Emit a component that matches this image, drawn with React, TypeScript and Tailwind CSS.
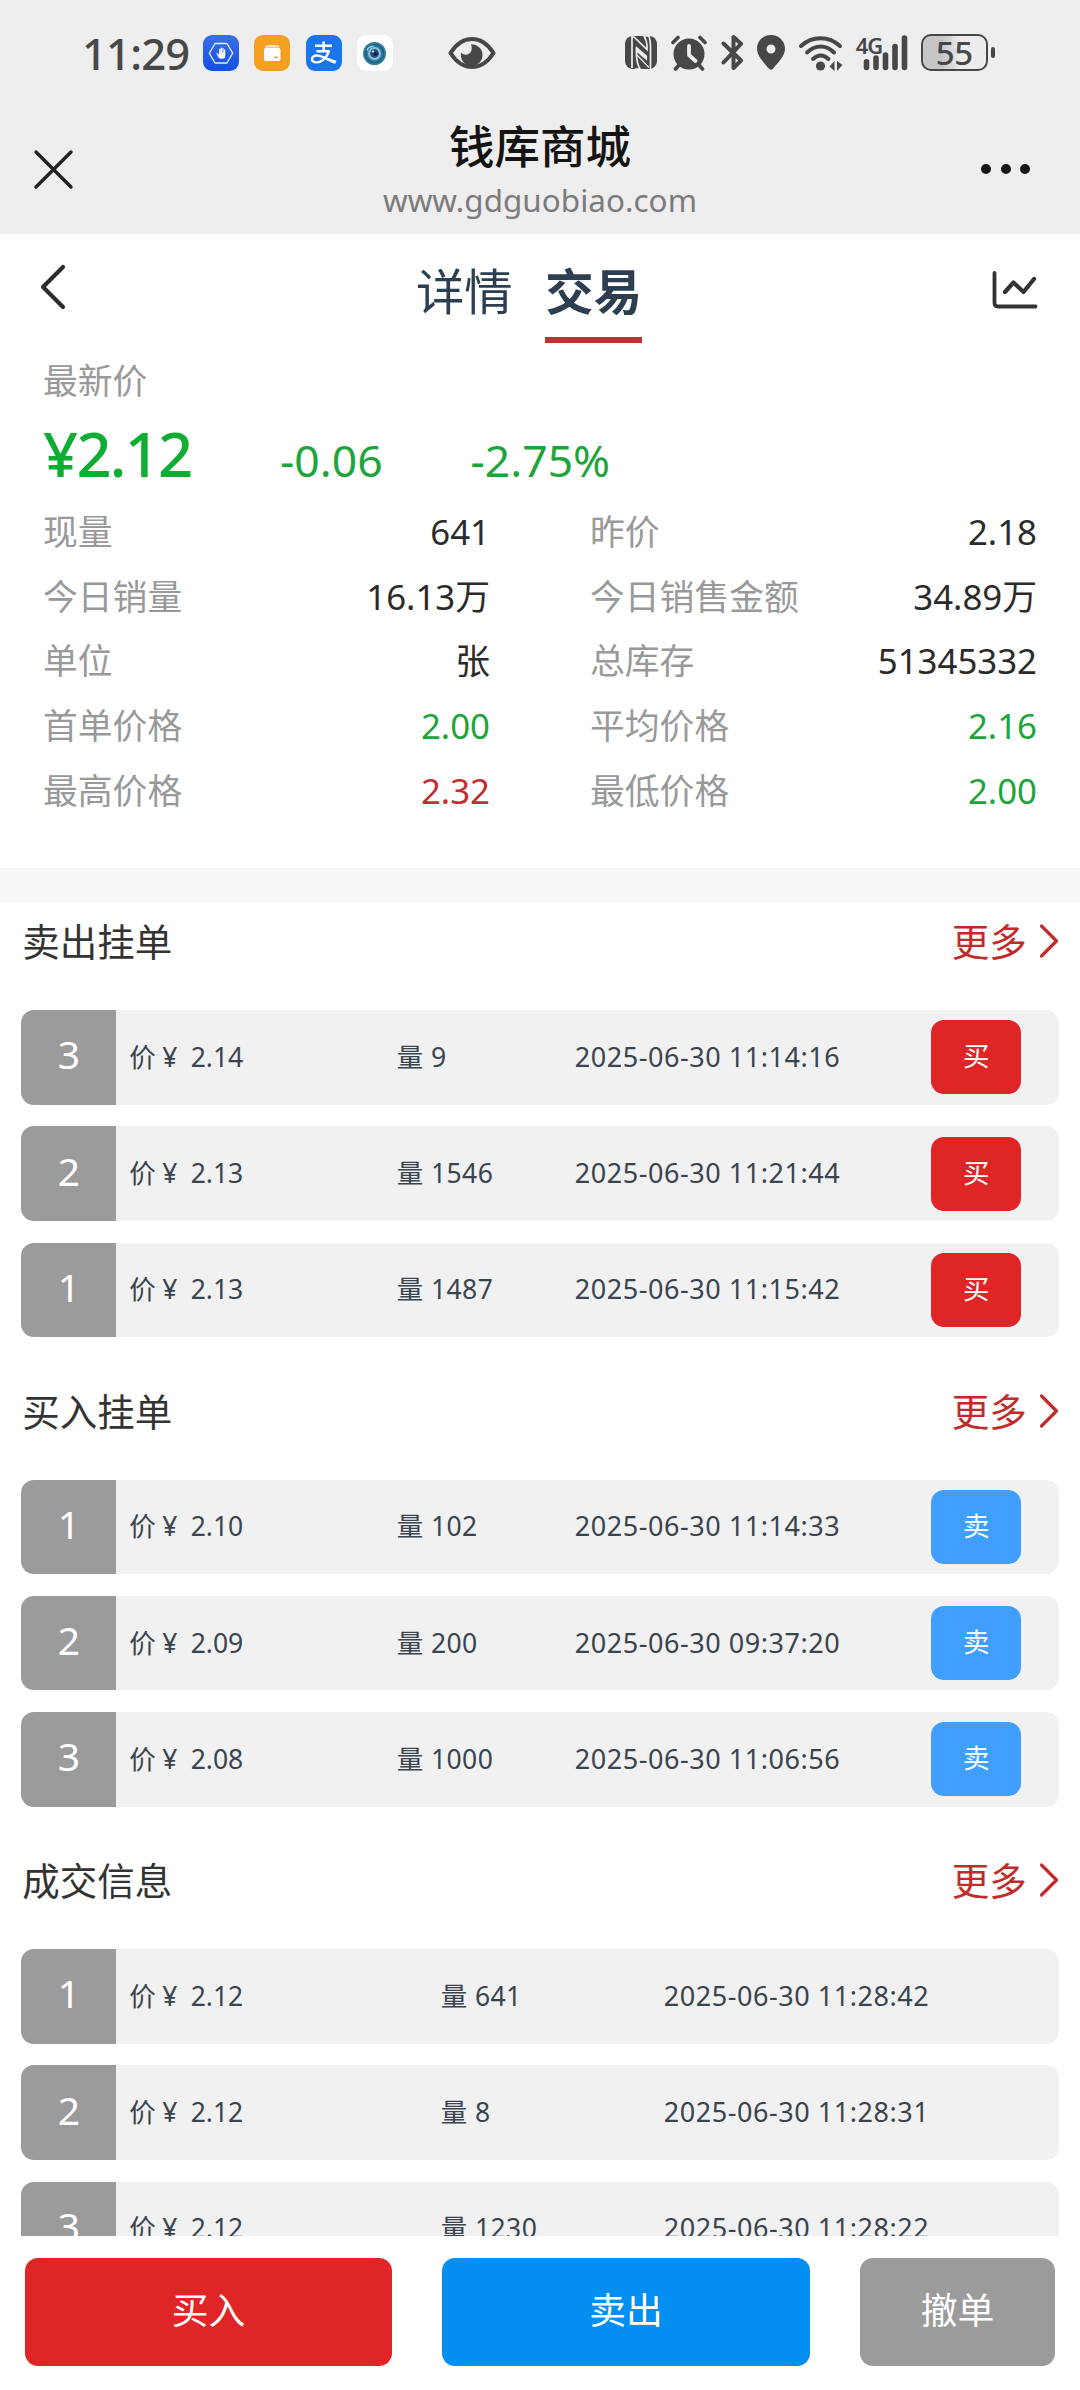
import React from "react";
import { SiAlipay } from "react-icons/si";

type Tone = "dark" | "green" | "red";
type Stat = { label: string; value: string; tone?: Tone };
type Order = { no: number; price: string; qty: string; time: string };

const stats: Stat[] = [
  { label: "现量", value: "641" },
  { label: "昨价", value: "2.18" },
  { label: "今日销量", value: "16.13万" },
  { label: "今日销售金额", value: "34.89万" },
  { label: "单位", value: "张" },
  { label: "总库存", value: "51345332" },
  { label: "首单价格", value: "2.00", tone: "green" },
  { label: "平均价格", value: "2.16", tone: "green" },
  { label: "最高价格", value: "2.32", tone: "red" },
  { label: "最低价格", value: "2.00", tone: "green" },
];

const sellOrders: Order[] = [
  { no: 3, price: "2.14", qty: "9", time: "2025-06-30 11:14:16" },
  { no: 2, price: "2.13", qty: "1546", time: "2025-06-30 11:21:44" },
  { no: 1, price: "2.13", qty: "1487", time: "2025-06-30 11:15:42" },
];

const buyOrders: Order[] = [
  { no: 1, price: "2.10", qty: "102", time: "2025-06-30 11:14:33" },
  { no: 2, price: "2.09", qty: "200", time: "2025-06-30 09:37:20" },
  { no: 3, price: "2.08", qty: "1000", time: "2025-06-30 11:06:56" },
];

const deals: Order[] = [
  { no: 1, price: "2.12", qty: "641", time: "2025-06-30 11:28:42" },
  { no: 2, price: "2.12", qty: "8", time: "2025-06-30 11:28:31" },
  { no: 3, price: "2.12", qty: "1230", time: "2025-06-30 11:28:22" },
];

const toneClass: Record<Tone, string> = {
  dark: "text-[#2b2b2b]",
  green: "text-[#1da53c]",
  red: "text-[#c12f30]",
};

function StatusBar() {
  return (
    <div className="flex h-[106px] items-center pb-[1px] pl-[82px] text-[#474747]">
      <span className="w-[121px] text-[43.500px] leading-[60px] font-medium tracking-[-0.800px] whitespace-nowrap">11:29</span>
      <div className="flex items-center gap-[15.400px]">
        <svg width="36" height="36" viewBox="0 0 36 36">
          <defs>
            <linearGradient id="guard" x1="0" y1="0" x2="0" y2="1">
              <stop offset="0" stopColor="#3b6fe8" />
              <stop offset="1" stopColor="#1350e4" />
            </linearGradient>
          </defs>
          <rect width="36" height="36" rx="9" fill="url(#guard)" />
          <path d="M12 8.500h12l5.700 9.700L24 28H12L6.300 18.200z" fill="none" stroke="#e4edff" strokeWidth="1.300" strokeLinejoin="round" />
          <path d="M13 17.500l3 2v-5.700h1.300v3.700h.4v-4.700h1.300v4.700h.4v-4.400h1.200v4.400h.4v-3h1.200v6.600c0 1.600-1 2.600-2.600 2.600h-1.500c-1.400 0-2.200-.6-2.900-1.700z" fill="#fff" />
        </svg>
        <svg width="36" height="36" viewBox="0 0 36 36">
          <rect width="36" height="36" rx="9" fill="#f5a021" />
          <path d="M13.500 10h9.500q2 0 2.500 2l.2.600H10.800l.4-.9Q12 10 13.500 10z" fill="#fde5bd" />
          <rect x="10" y="13" width="16.500" height="13" rx="2" fill="#fff" />
          <rect x="20" y="21.500" width="4" height="1.500" rx=".7" fill="#f5a021" />
        </svg>
        <svg width="36" height="36" viewBox="0 0 36 36">
          <rect width="36" height="36" rx="9" fill="#1b76ee" />
          <path d="M9 10.800h17M17.700 6.500v9.500M10.500 16.200h13.500" fill="none" stroke="#fff" strokeWidth="2.600" />
          <path d="M23 16.200c-2.200 6.800-7.500 11.200-12.500 11.200-3 0-4.700-1.500-4.500-3.600.2-2.300 2.500-3.500 5.500-3.200 5.500.6 11.500 4.500 17.500 6.200" fill="none" stroke="#fff" strokeWidth="2.400" />
          <path d="M21 23.200l9.500 2.600-1.500 3.200-9-4z" fill="#fff" />
        </svg>
        <svg width="36" height="36" viewBox="0 0 36 36">
          <rect width="36" height="36" rx="9" fill="#fff" />
          <circle cx="17.500" cy="18.500" r="11.500" fill="#2d7f9e" />
          <circle cx="17.500" cy="18.500" r="9" fill="none" stroke="#1f5f83" strokeWidth="1.500" />
          <circle cx="17.500" cy="18.500" r="6.500" fill="#8fbfdc" />
          <circle cx="17.500" cy="18.500" r="4.400" fill="#25507f" />
          <circle cx="18.500" cy="19" r="2" fill="#0e2546" />
          <path d="M10 15a8 8 0 0 1 6-4" fill="none" stroke="#bfe3ee" strokeWidth="1.200" strokeLinecap="round" />
          <circle cx="16" cy="16.500" r="1" fill="#fff" />
        </svg>
      </div>
      <svg className="ml-[55px]" width="48" height="34" viewBox="0 0 48 34">
        <path d="M2.500 17C8.500 7.500 15 3 24 3s15.500 4.500 21.500 14C39.500 26.500 33 31 24 31S8.500 26.500 2.500 17z" fill="none" stroke="currentColor" strokeWidth="4" strokeLinejoin="round" />
        <path d="M23 8.300A10.800 10.800 0 1 1 13.200 16.500c2.300 2.800 6.800 2.900 9 .3 2.100-2.500 1.900-5.700.8-8.500z" fill="currentColor" />
      </svg>

      <svg className="ml-[129px]" width="32" height="33" viewBox="0 0 32 33">
        <rect width="32" height="33" rx="8" fill="currentColor" />
        <path d="M7 0v32M7 1l2 0 13 12.500V9Q21.500 4 19 0h5q1.500 5 1.500 10v23M11.500 11.500v8Q12 28 15 33h-5" fill="none" stroke="#eee" strokeWidth="1.700" />
        <path d="M11.500 11.500L21.500 20v3.500L11.500 15zM11.500 18.500L24 31.500" fill="#eee" stroke="#eee" strokeWidth="1.200" />
      </svg>
      <svg className="ml-[14px]" width="36" height="36" viewBox="0 0 36 36">
        <circle cx="18" cy="19" r="15.500" fill="currentColor" />
        <path d="M1.500 7.500L7.500 2.500M34.500 7.500l-6-5" stroke="#eee" strokeWidth="7" />
        <path d="M2 7.500L7 2.500M34 7.500l-5-5M8 30l-3.500 4M28 30l3.500 4" stroke="currentColor" strokeWidth="3.600" strokeLinecap="round" />
        <path d="M18 11v9l6.500 6" fill="none" stroke="#eee" strokeWidth="3.800" strokeLinecap="round" strokeLinejoin="round" />
      </svg>
      <svg className="ml-[14px]" width="23" height="37" viewBox="0 0 23 37">
        <path d="M2.500 9.500L20 26.500 12.500 34V22M2.500 28.500L20 9.800 12.500 3v12" fill="none" stroke="currentColor" strokeWidth="4" strokeLinecap="round" strokeLinejoin="round" />
      </svg>
      <svg className="ml-[12.500px]" width="28" height="35" viewBox="0 0 28 35">
        <path fillRule="evenodd" d="M14 0C6.200 0 0 6.100 0 13.600 0 21 6 26.500 11.800 33.500q2.200 2.600 4.400 0C22 26.500 28 21 28 13.600 28 6.100 21.800 0 14 0zm0 9.500a4.500 4.500 0 1 1 0 9 4.500 4.500 0 0 1 0-9z" fill="currentColor" />
      </svg>
      <svg className="ml-[13px]" width="46" height="36" viewBox="0 0 46 36">
        <path d="M3 11C14 0.500 31 0.500 42 11M9 17.500C17.500 9.500 28 9.500 36 17.500M15 24c5-4.500 10.500-4.500 15.500 0" fill="none" stroke="currentColor" strokeWidth="4" strokeLinecap="round" />
        <circle cx="22.500" cy="31" r="4.600" fill="currentColor" />
        <path d="M36.500 26v10L31.500 31.500zM39 26v10l5.500-6z" fill="currentColor" />
      </svg>
      <div className="relative ml-[12px] h-[36px] w-[52px]">
        <span className="absolute -top-[2px] left-0 text-[22px] leading-[24px] font-semibold tracking-[-1px]">4G</span>
        <svg width="52" height="36" viewBox="0 0 52 36">
          <path d="M10.500 26.800v5.700M20 23v9.500M29.500 20v12.500M39 11.500v21M48.500 3v29.500" stroke="currentColor" strokeWidth="5.600" strokeLinecap="round" />
        </svg>
      </div>
      <div className="ml-[13px] flex items-center gap-[3px]">
        <span className="flex h-[37px] w-[67px] items-center justify-center rounded-[10px] border-[2.500px] border-[#474747] bg-linear-to-r from-[#c6c6c6] from-30% to-[#ededed] to-60% text-[33px] leading-[32px] font-medium tracking-[-0.500px]">
          55
        </span>
        <span className="h-[11px] w-[4px] rounded-full bg-[#474747]" />
      </div>
    </div>
  );
}

function NavBar() {
  return (
    <header className="grid h-[128px] grid-cols-[1fr_auto_1fr] items-center pr-[50px] pl-[33px]">
      <svg className="-mt-[2px]" width="41" height="41" viewBox="0 0 41 41">
        <path d="M3 3l35 35M38 3L3 38" stroke="#222" strokeWidth="3.400" strokeLinecap="round" />
      </svg>
      <div className="flex h-full flex-col items-center pt-[10px] pl-[17px]">
        <h1 className="text-[45.500px] leading-[60px] font-medium text-[#141414]">钱库商城</h1>
        <p className="mt-[4px] text-[31.400px] leading-[40px] tracking-[0.050px] text-[#7b7b7b]">www.gdguobiao.com</p>
      </div>
      <div className="-mt-[2px] flex justify-end gap-[9.500px]">
        <span className="size-[10px] rounded-full bg-[#161616]" />
        <span className="size-[10px] rounded-full bg-[#161616]" />
        <span className="size-[10px] rounded-full bg-[#161616]" />
      </div>
    </header>
  );
}

function TabBar() {
  return (
    <nav className="flex h-[109px] items-start justify-between pr-[41px] pl-[39px]">
      <svg className="mt-[29px]" width="28" height="48" viewBox="0 0 28 48">
        <path d="M24 4L4 24l20 20" fill="none" stroke="#2c2c2c" strokeWidth="4.200" strokeLinecap="round" strokeLinejoin="round" />
      </svg>
      <div className="flex gap-[32.500px] pt-[26.500px] text-[48.400px] leading-[60px] text-[#2c3e50]">
        <span>详情</span>
        <span className="flex flex-col gap-[16.500px] font-bold">
          交易
          <span className="h-[6px] bg-[#bb3330]" />
        </span>
      </div>
      <svg className="mt-[36px]" width="48" height="40" viewBox="0 0 48 40">
        <path d="M3.500 3v30q0 3.500 3.500 3.500h37.500" fill="none" stroke="#333" strokeWidth="3.800" strokeLinecap="round" strokeLinejoin="round" />
        <path d="M14 22l8.500-9.500L32.500 22 43 9" fill="none" stroke="#333" strokeWidth="4.200" strokeLinecap="round" strokeLinejoin="round" />
      </svg>
    </nav>
  );
}

function Summary() {
  return (
    <section className="h-[525px] pt-[18px] pr-[43px] pl-[43px]">
      <p className="text-[34.800px] leading-[40px] text-[#999]">最新价</p>
      <div className="mt-[11.500px] flex h-[80px] items-baseline leading-[80px] text-[#1da53c]">
        <span className="w-[237px] text-[61.500px] font-medium tracking-[-1.800px] text-[#10ad33]">¥2.12</span>
        <span className="w-[190.500px] text-[44.500px]">-0.06</span>
        <span className="text-[44.500px]">-2.75%</span>
      </div>
      <dl className="mt-[7px] grid grid-cols-2 gap-x-[100px] text-[34.800px]">
        {stats.map((s) => (
          <div key={s.label} className="flex h-[64.800px] items-center justify-between leading-[64px]">
            <dt className="text-[#999]">{s.label}</dt>
            <dd className={toneClass[s.tone ?? "dark"]}>{s.value}</dd>
          </div>
        ))}
      </dl>
    </section>
  );
}

function OrderRow({ order, action }: { order: Order; action?: "买" | "卖" }) {
  return (
    <li className="flex h-[94.500px] overflow-hidden rounded-[13px] bg-[#f1f1f1] text-[26.500px] leading-[40px] text-[#39444f]">
      <span className="flex w-[95px] items-center justify-center bg-[#9b9b9b] pb-[6px] text-[39px] text-white">{order.no}</span>
      <div
        className={
          action
            ? "grid flex-1 grid-cols-[267.500px_178px_356.500px_90px] items-center pl-[13px]"
            : "grid flex-1 grid-cols-[311.500px_223px_1fr] items-center pl-[13px]"
        }
      >
        <span className="pb-[1px]">
          价<span className="inline-block w-[28px] text-center">¥</span> {order.price}
        </span>
        <span className="pb-[1px] tracking-[0.400px]">量 {order.qty}</span>
        <span className="pb-[1px] text-[27px] tracking-[0.550px] whitespace-nowrap">{order.time}</span>
        {action && (
          <button
            className={
              action === "买"
                ? "h-[74px] rounded-[13px] bg-[#df2525] pb-[2px] text-white"
                : "h-[74px] rounded-[13px] bg-[#409eff] pb-[2px] text-white"
            }
          >
            {action}
          </button>
        )}
      </div>
    </li>
  );
}

function OrderSection({ title, orders, action }: { title: string; orders: Order[]; action?: "买" | "卖" }) {
  return (
    <section className="px-[21.300px] pb-[34.500px]">
      <header className="mb-[28px] flex h-[80px] items-center justify-between pl-[1px] text-[37.500px] leading-[50px]">
        <h2 className="text-[#333]">{title}</h2>
        <a className="flex items-center gap-[12px] text-[#c12b2a]">
          更多
          <svg className="-mt-[2px]" width="20" height="36" viewBox="0 0 20 36">
            <path d="M2.500 3L17.500 18 2.500 33" fill="none" stroke="currentColor" strokeWidth="3.200" strokeLinecap="round" strokeLinejoin="round" />
          </svg>
        </a>
      </header>
      <ul className="flex flex-col gap-[21.750px]">
        {orders.map((o) => (
          <OrderRow key={o.no} order={o} action={action} />
        ))}
      </ul>
    </section>
  );
}

function ActionBar() {
  return (
    <footer className="flex h-[154px] shrink-0 items-start justify-between bg-white px-[25px] pt-[22px] text-[36.800px] leading-[50px] text-white">
      <button className="h-[108px] w-[367px] rounded-[13px] bg-[#df2525] pb-[4px]">买入</button>
      <button className="h-[108px] w-[367.500px] rounded-[13px] bg-[#038ff1] pb-[4px]">卖出</button>
      <button className="h-[108px] w-[195px] rounded-[13px] bg-[#9b9b9b] pb-[4px]">撤单</button>
    </footer>
  );
}

export default function App() {
  return (
    <div className="flex h-[2390px] w-[1080px] flex-col overflow-hidden bg-white font-['Noto_Sans','Noto_Sans_CJK_SC',sans-serif]">
      <div className="h-[234px] shrink-0 bg-[#eee]">
        <StatusBar />
        <NavBar />
      </div>
      <main className="min-h-0 flex-1 overflow-hidden">
        <TabBar />
        <Summary />
        <div className="h-[34px] bg-[#f6f6f6]" />
        <OrderSection title="卖出挂单" orders={sellOrders} action="买" />
        <OrderSection title="买入挂单" orders={buyOrders} action="卖" />
        <OrderSection title="成交信息" orders={deals} />
      </main>
      <ActionBar />
    </div>
  );
}
